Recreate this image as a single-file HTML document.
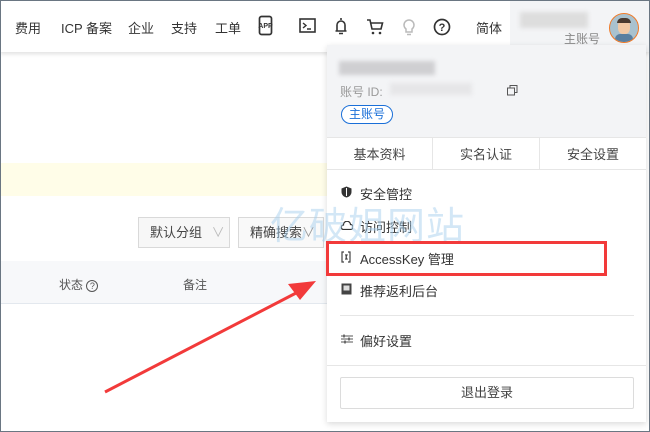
<!DOCTYPE html>
<html><head><meta charset="utf-8"><style>
*{margin:0;padding:0;box-sizing:border-box}
body{width:650px;height:432px;overflow:hidden;background:#fff;font-family:"Liberation Sans","Noto Sans CJK SC",sans-serif;color:#333;position:relative;font-size:12px}
.a{position:absolute}
.frame{left:0;top:0;width:650px;height:432px;border:1px solid #6a7682;z-index:50;pointer-events:none}
.hdr{left:0;top:0;width:650px;height:52px;background:#fff;box-shadow:0 2px 4px rgba(0,0,0,.12);z-index:5}
.nav{top:18px;font-size:13px;color:#333}
.drop{left:327px;top:45px;width:319px;height:377px;background:#fff;box-shadow:0 2px 6px rgba(0,0,0,.15);z-index:6}
.mi{left:14px;font-size:13px;color:#333}
.tab{top:92px;height:33px;line-height:33px;text-align:center;font-size:13px;border-top:1px solid #e6e6e6;border-bottom:1px solid #e6e6e6;color:#444}
</style></head><body>
<div class="a frame"></div>
<div class="a hdr">
 <div class="a nav" style="left:15px">费用</div>
 <div class="a nav" style="left:61px">ICP 备案</div>
 <div class="a nav" style="left:128px">企业</div>
 <div class="a nav" style="left:171px">支持</div>
 <div class="a nav" style="left:215px">工单</div>
 <svg class="a" style="left:257px;top:15px" width="18" height="22" viewBox="0 0 18 22"><rect x="2.5" y="1.5" width="12" height="18" rx="2" fill="none" stroke="#333" stroke-width="1.7"/><text x="8.5" y="13" font-size="7" font-weight="bold" text-anchor="middle" fill="#333" font-family="Liberation Sans">APP</text></svg>
 <svg class="a" style="left:299px;top:18px" width="18" height="16"><rect x="1" y="1" width="15" height="13" fill="none" stroke="#333" stroke-width="1.6"/><path d="M4 5l3 2.5-3 2.5M8 11h4" stroke="#333" stroke-width="1.4" fill="none"/></svg>
 <svg class="a" style="left:334px;top:16px" width="14" height="20"><path d="M7 2v2M3 15V9a4 4 0 018 0v6M1.5 15h11M5 17.5h4" stroke="#333" stroke-width="1.6" fill="none"/></svg>
 <svg class="a" style="left:366px;top:18px" width="18" height="18"><path d="M1 2h3l2 9h9l1.5-6H5" stroke="#333" stroke-width="1.6" fill="none"/><circle cx="7" cy="15" r="1.3" fill="#333"/><circle cx="14" cy="15" r="1.3" fill="#333"/></svg>
 <svg class="a" style="left:402px;top:17px" width="14" height="20"><path d="M4 12a5 5 0 116 0v3H4z M5 17.5h4" stroke="#bbb" stroke-width="1.5" fill="none"/></svg>
 <svg class="a" style="left:433px;top:18px" width="18" height="18"><circle cx="9" cy="9" r="7.5" stroke="#333" stroke-width="1.7" fill="none"/><text x="9" y="13" font-size="11" font-weight="bold" text-anchor="middle" fill="#333" font-family="Liberation Sans">?</text></svg>
 <div class="a nav" style="left:476px">简体</div>
 <div class="a" style="left:510px;top:0;width:140px;height:52px;background:#f3f4f6"></div>
 <div class="a" style="left:520px;top:12px;width:68px;height:16px;background:#ddd;filter:blur(2px)"></div>
 <div class="a" style="left:564px;top:30px;font-size:12px;color:#888">主账号</div>
 <div class="a" style="left:609px;top:13px;width:30px;height:30px;border-radius:50%;background:#a9c2cf;border:1.5px solid #f07a28;overflow:hidden">
  <div class="a" style="left:8px;top:6px;width:12px;height:14px;border-radius:40%;background:#f2c9a5"></div>
  <div class="a" style="left:7px;top:4px;width:14px;height:5px;border-radius:5px 5px 0 0;background:#4a3a30"></div>
  <div class="a" style="left:5px;top:20px;width:18px;height:10px;border-radius:5px 5px 0 0;background:#5a7fa0"></div>
 </div>
</div>
<div class="a" style="left:0;top:163px;width:330px;height:33px;background:#fffde8"></div>
<div class="a" style="left:138px;top:217px;width:92px;height:31px;border:1px solid #d9d9d9;background:#f7f7f7;font-size:13px;line-height:29px;padding-left:11px;color:#444">默认分组 <span style="color:#bbb;margin-left:6px">∨</span></div>
<div class="a" style="left:238px;top:217px;width:86px;height:31px;border:1px solid #d9d9d9;background:#f9f9f9;font-size:13px;line-height:29px;padding-left:11px;color:#444">精确搜索<span style="color:#999">∨</span></div>
<div class="a" style="left:0;top:261px;width:330px;height:43px;background:#f7f8fa;border-bottom:1px solid #e3e8ee"></div>
<div class="a" style="left:59px;top:276px;font-size:12px;color:#555">状态 <span style="display:inline-block;width:12px;height:12px;border:1px solid #555;border-radius:50%;font-size:9px;line-height:10px;text-align:center">?</span></div>
<div class="a" style="left:183px;top:276px;font-size:12px;color:#555">备注</div>
<div class="a drop">
 <div class="a" style="left:0;top:0;width:319px;height:92px;background:#f3f4f6"></div>
 <div class="a" style="left:12px;top:16px;width:96px;height:14px;background:#cfcfd2;filter:blur(2px)"></div>
 <div class="a" style="left:13px;top:38px;font-size:12px;color:#999">账号 ID:</div>
 <div class="a" style="left:63px;top:38px;width:82px;height:12px;background:#e6e6e8;filter:blur(2px)"></div>
 <svg class="a" style="left:180px;top:40px" width="11" height="11"><rect x="0.5" y="3" width="7" height="7" fill="none" stroke="#555"/><path d="M3 3V0.5h7v7H7.5" fill="none" stroke="#555"/></svg>
 <div class="a" style="left:14px;top:60px;height:19px;padding:0 7px;border:1px solid #1a6fd8;border-radius:10px;font-size:12px;line-height:17px;color:#1a6fd8;background:#fff">主账号</div>
 <div class="a tab" style="left:0;width:106px;border-right:1px solid #e6e6e6">基本资料</div>
 <div class="a tab" style="left:106px;width:107px;border-right:1px solid #e6e6e6">实名认证</div>
 <div class="a tab" style="left:213px;width:106px">安全设置</div>
 <svg class="a" style="left:14px;top:141px" width="11" height="12"><path d="M5.5 0.5L10.5 2.5v3.5c0 3-2.5 5-5 5.5C3 11 0.5 9 0.5 6V2.5z" fill="#333"/><path d="M5.5 2v8" stroke="#fff" stroke-width="1"/></svg>
 <div class="a mi" style="left:33px;top:139px">安全管控</div>
 <svg class="a" style="left:13px;top:176px" width="13" height="9"><path d="M3 8.5h7.5a2.5 2.5 0 000-5A3.5 3.5 0 003.5 4 2.3 2.3 0 003 8.5z" fill="none" stroke="#333" stroke-width="1.2"/></svg>
 <div class="a mi" style="left:33px;top:172px">访问控制</div>
 <svg class="a" style="left:14px;top:206px" width="10" height="12"><path d="M3 1H1v10h2M7 1h2v10H7M4 4h2l-1 2 1 2H4" fill="none" stroke="#444" stroke-width="1.2"/></svg>
 <div class="a mi" style="left:33px;top:204px">AccessKey 管理</div>
 <svg class="a" style="left:14px;top:238px" width="11" height="12"><rect x="0.5" y="0.5" width="10" height="11" fill="#444"/><rect x="2.5" y="2.5" width="6" height="5" fill="#ddd"/></svg>
 <div class="a mi" style="left:33px;top:236px">推荐返利后台</div>
 <div class="a" style="left:13px;top:270px;width:294px;height:1px;background:#e6e6e6"></div>
 <svg class="a" style="left:14px;top:289px" width="12" height="10"><path d="M0 2h12M0 5h12M0 8h12" stroke="#555" stroke-width="1.1"/><path d="M3 0.5v3M8 3.5v3M4 6.5v3" stroke="#555" stroke-width="1.5"/></svg>
 <div class="a mi" style="left:33px;top:286px">偏好设置</div>
 <div class="a" style="left:0;top:320px;width:319px;height:1px;background:#e6e6e6"></div>
 <div class="a" style="left:13px;top:332px;width:294px;height:32px;border:1px solid #dcdcdc;border-radius:2px;text-align:center;line-height:30px;font-size:13px;color:#444">退出登录</div>
</div>
<div class="a" style="left:270px;top:200px;font-size:38px;color:#a8d0ee;opacity:.5;z-index:8;letter-spacing:1px;font-family:'Noto Sans CJK SC',sans-serif;line-height:46px">亿破姐网站</div>
<div class="a" style="left:326px;top:241px;width:281px;height:35px;border:3px solid #f23a3a;z-index:9"></div>
<svg class="a" style="left:0;top:0;z-index:9" width="650" height="432"><path d="M105 392L298 292" stroke="#f23a3a" stroke-width="3"/><path d="M316 281L288 284L300 300Z" fill="#f23a3a"/></svg>
</body></html>
